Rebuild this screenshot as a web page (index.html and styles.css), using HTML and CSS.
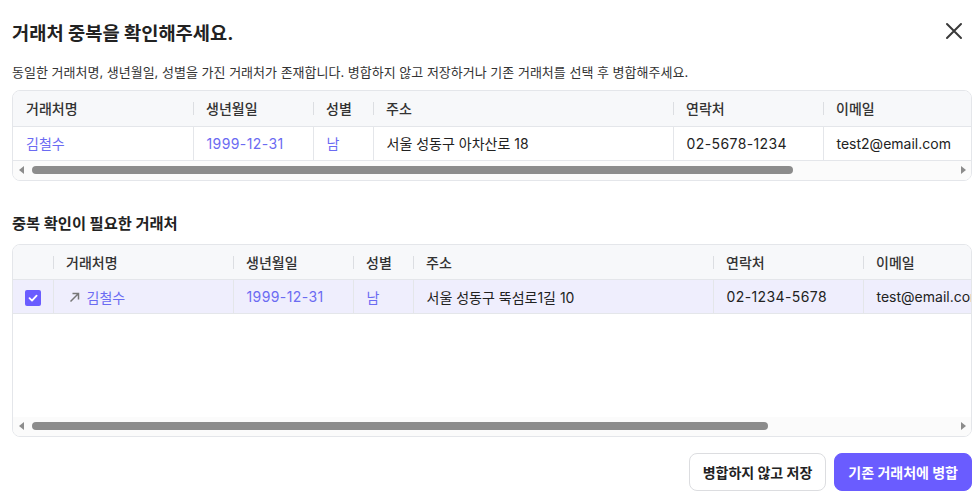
FILE: index.html
```html
<!DOCTYPE html>
<html lang="ko">
<head>
  <meta charset="UTF-8">
  <meta name="viewport" content="width=device-width, initial-scale=1.0">
  <title>거래처 중복 확인</title>
  <link rel="stylesheet" href="styles.css">
</head>
<body>
  <div class="modal">
    <div class="modal-head">
      <h1>거래처 중복을 확인해주세요.</h1>
      <button class="close-btn" aria-label="닫기">
        <svg width="18" height="18" viewBox="0 0 18 18"><path d="M2 2 L16 16 M16 2 L2 16" stroke="#3a3a3a" stroke-width="2" stroke-linecap="round" fill="none"/></svg>
      </button>
    </div>
    <p class="desc">동일한 거래처명, 생년월일, 성별을 가진 거래처가 존재합니다. 병합하지 않고 저장하거나 기존 거래처를 선택 후 병합해주세요.</p>

    <div class="grid">
      <div class="grid-view">
        <table class="grid-table">
          <colgroup>
            <col style="width:180px"><col style="width:120px"><col style="width:60px">
            <col style="width:300px"><col style="width:150px"><col style="width:150px"><col style="width:220px">
          </colgroup>
          <thead>
            <tr><th>거래처명</th><th>생년월일</th><th>성별</th><th>주소</th><th>연락처</th><th>이메일</th><th></th></tr>
          </thead>
          <tbody>
            <tr>
              <td class="link">김철수</td><td class="link num">1999-12-31</td><td class="link">남</td>
              <td>서울 성동구 아차산로 18</td><td class="num">02-5678-1234</td><td>test2@email.com</td><td></td>
            </tr>
          </tbody>
        </table>
      </div>
      <div class="hscroll">
        <span class="arrow arrow-left"></span>
        <div class="track"><div class="thumb" style="width:761px"></div></div>
        <span class="arrow arrow-right"></span>
      </div>
    </div>

    <h2 class="section-title">중복 확인이 필요한 거래처</h2>

    <div class="grid">
      <div class="grid-view grid-view-tall">
        <table class="grid-table">
          <colgroup>
            <col style="width:40px"><col style="width:180px"><col style="width:120px"><col style="width:60px">
            <col style="width:300px"><col style="width:150px"><col style="width:150px"><col style="width:220px">
          </colgroup>
          <thead>
            <tr><th class="check-col"></th><th>거래처명</th><th>생년월일</th><th>성별</th><th>주소</th><th>연락처</th><th>이메일</th><th></th></tr>
          </thead>
          <tbody>
            <tr class="selected">
              <td class="check-col"><span class="checkbox"><svg width="12" height="12" viewBox="0 0 12 12"><path d="M2.5 6.2 L5 8.6 L9.6 3.6" stroke="#fff" stroke-width="1.8" fill="none" stroke-linecap="round" stroke-linejoin="round"/></svg></span></td>
              <td class="link"><span class="open-icon"><svg width="11" height="11" viewBox="0 0 11 11"><path d="M1.5 9.5 L9.5 1.5 M3.5 1.5 H9.5 V7.5" stroke="#777" stroke-width="1.5" fill="none"/></svg></span>김철수</td>
              <td class="link num">1999-12-31</td><td class="link">남</td>
              <td>서울 성동구 뚝섬로1길 10</td><td class="num">02-1234-5678</td><td>test@email.com</td><td></td>
            </tr>
          </tbody>
        </table>
      </div>
      <div class="hscroll">
        <span class="arrow arrow-left"></span>
        <div class="track"><div class="thumb" style="width:736px"></div></div>
        <span class="arrow arrow-right"></span>
      </div>
    </div>

    <div class="actions">
      <button class="btn btn-outline">병합하지 않고 저장</button>
      <button class="btn btn-primary">기존 거래처에 병합</button>
    </div>
  </div>
</body>
</html>
```

FILE: styles.css
```css
:root {
  --primary: #6a5cff;
  --link: #6b6bf2;
  --text: #222;
  --line: #e4e6ea;
  --head-bg: #f7f8fa;
}
* { box-sizing: border-box; }
body {
  margin: 0;
  background: #fff;
  color: var(--text);
  font-family: Inter, "Noto Sans CJK KR", sans-serif;
}
.modal { padding: 14px 8px 0 12px; }
.modal-head { display: flex; justify-content: space-between; align-items: center; height: 34px; }
.modal-head h1 { margin: 0; font-size: 18.7px; font-weight: 700; color: #222; }
.close-btn {
  border: none; background: none; padding: 0; margin-right: 9px;
  width: 18px; height: 18px; display: flex; cursor: pointer;
}
.desc {
  margin: 14px 0 8px; font-size: 13px; line-height: 20px; color: #333;
}
.grid {
  border: 1px solid var(--line); border-radius: 8px; overflow: hidden;
}
.grid-view { overflow: hidden; }
.grid-view-tall { height: 172px; }
.grid-table {
  border-collapse: collapse; table-layout: fixed; width: 1180px;
  font-size: 14px;
}
.grid-table th {
  position: relative; height: 35px; padding: 0 13px;
  background: var(--head-bg); border-bottom: 1px solid var(--line);
  text-align: left; font-size: 14px; font-weight: 500; color: #333;
}
.grid-table th + th::before {
  content: ""; position: absolute; left: 0; top: 11px;
  width: 1px; height: 13px; background: #dcdee2;
}
.grid-table td {
  height: 34px; padding: 0 13px; border-bottom: 1px solid var(--line);
  white-space: nowrap; overflow: hidden; color: #222;
}
.grid-table td + td { border-left: 1px solid var(--line); }
.grid-table td.link { color: var(--link); }
.grid-table td.num { letter-spacing: 0.4px; }
.grid-table tr.selected td { background: #efeefd; }
.grid-table .check-col { padding: 0; text-align: center; }
.checkbox {
  display: inline-flex; align-items: center; justify-content: center;
  width: 16px; height: 16px; border-radius: 2px; background: var(--primary);
  vertical-align: middle; margin-left: 1px;
}
.open-icon { display: inline-block; margin: 0 7px 0 2px; }
.hscroll {
  display: flex; align-items: center; height: 19px; background: #fbfbfb;
}
.track { flex: 1; padding-left: 3px; }
.thumb { height: 8px; border-radius: 4px; background: #8c8c8c; }
.arrow { width: 16px; display: flex; justify-content: center; }
.arrow::before { content: ""; border-style: solid; border-color: transparent; }
.arrow-left::before { border-width: 4px 5px 4px 0; border-right-color: #8c8c8c; }
.arrow-right::before { border-width: 4px 0 4px 5px; border-left-color: #8c8c8c; }
.section-title {
  margin: 32px 0 9px; font-size: 15.3px; line-height: 22px;
  font-weight: 700; color: #222;
}
.actions { display: flex; justify-content: flex-end; gap: 8px; margin-top: 16px; }
.btn {
  height: 38px; padding: 0 13px; border-radius: 8px;
  font-family: inherit; font-size: 14px; font-weight: 700;
  cursor: pointer;
}
.btn-outline { background: #fff; border: 1px solid #dcdde0; color: #222; }
.btn-primary { background: var(--primary); border: 1px solid var(--primary); color: #fff; }
```
